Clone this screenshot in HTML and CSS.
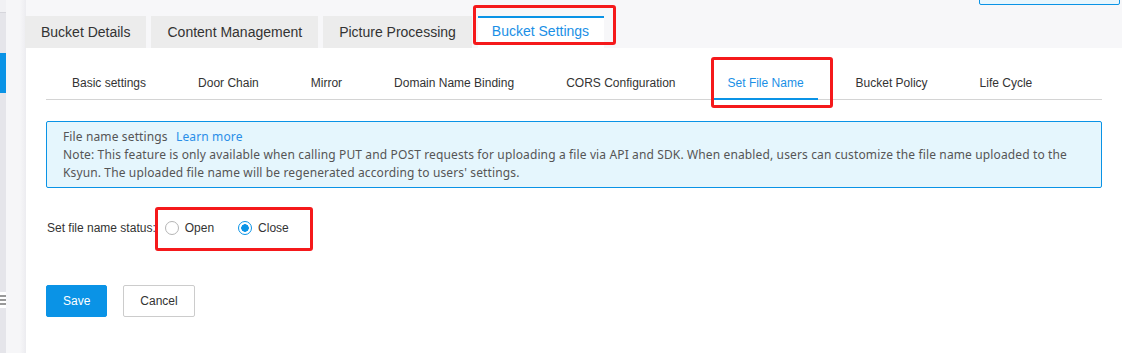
FILE: index.html
```html
<!DOCTYPE html>
<html lang="en">

<head>
    <meta charset="UTF-8">
    <meta name="viewport" content="width=device-width, initial-scale=1.0">
    <title>Bucket Settings</title>
    <link rel="stylesheet" href="styles.css">
</head>

<body>
    <div class="layout">
        <aside class="side-strip">
            <div class="side-active"></div>
            <div class="side-handle">
                <span></span><span></span><span></span>
            </div>
        </aside>
        <div class="gutter"></div>

        <main class="main">
            <div class="top-button"></div>

            <!-- Top level tabs -->
            <ul class="tabs">
                <li class="tab">Bucket Details</li>
                <li class="tab">Content Management</li>
                <li class="tab">Picture Processing</li>
                <li class="tab active">Bucket Settings<span class="mark mark-tab"></span></li>
            </ul>

            <section class="panel">
                <ul class="sub-tabs">
                    <li class="sub-tab">Basic settings</li>
                    <li class="sub-tab">Door Chain</li>
                    <li class="sub-tab">Mirror</li>
                    <li class="sub-tab">Domain Name Binding</li>
                    <li class="sub-tab">CORS Configuration</li>
                    <li class="sub-tab active">Set File Name<span class="mark mark-sub"></span></li>
                    <li class="sub-tab">Bucket Policy</li>
                    <li class="sub-tab">Life Cycle</li>
                </ul>

                <div class="notice">
                    <p>File name settings <a href="#" class="learn-more">Learn more</a></p>
                    <p>Note: This feature is only available when calling PUT and POST requests for uploading a file via API and SDK. When enabled, users can customize the file name uploaded to the<br>
                        Ksyun. The uploaded file name will be regenerated according to users' settings.</p>
                </div>

                <div class="form-row">
                    <span class="form-label">Set file name status:</span>
                    <div class="radio-group">
                        <label class="radio"><span class="radio-dot"></span>Open</label>
                        <label class="radio checked"><span class="radio-dot"></span>Close</label>
                        <span class="mark mark-radio"></span>
                    </div>
                </div>

                <div class="actions">
                    <button class="btn btn-primary">Save</button>
                    <button class="btn">Cancel</button>
                </div>
            </section>
        </main>
    </div>
</body>

</html>
```

FILE: styles.css
```css
/* Page base */
* {
    box-sizing: border-box;
}

body {
    margin: 0;
    font-family: "Liberation Sans", Arial, sans-serif;
    color: #333;
    background: #f7f7f9;
}

ul {
    list-style: none;
    margin: 0;
    padding: 0;
}

.layout {
    display: flex;
    height: 353px;
    overflow: hidden;
}

/* Left sidebar edge */
.side-strip {
    position: relative;
    width: 6px;
    flex-shrink: 0;
    background: #e5e5ea;
    border-top: 12px solid #f1f1f4;
    box-shadow: inset 0 1px 0 #d6d6dc;
}

.side-active {
    margin-top: 41px;
    height: 40px;
    background: #0a93e6;
}

.side-handle {
    display: flex;
    flex-direction: column;
    gap: 2px;
    margin-top: 199px;
    padding: 3px 0;
    background: #fff;
}

.side-handle span {
    height: 2px;
    background: #999;
}

.gutter {
    width: 20px;
    flex-shrink: 0;
    background: linear-gradient(to right, #f6f6f8 70%, #ececf0);
}

.main {
    position: relative;
    flex: 1;
    display: flex;
    flex-direction: column;
    padding-top: 16px;
}

.top-button {
    position: absolute;
    top: -11px;
    right: 2px;
    width: 141px;
    height: 16px;
    background: #e8f6fd;
    border: 1px solid #0a93e6;
    border-radius: 2px;
}

/* Top tabs */
.tabs {
    display: flex;
    gap: 5px;
    margin-left: -1px;
}

.tab {
    height: 32px;
    padding: 0 16px;
    line-height: 32px;
    font-size: 14px;
    color: #333;
    background: #ececec;
}

.tab:nth-child(3) {
    margin-right: 1px;
}

.tab.active {
    position: relative;
    padding: 0 15px 0 14px;
    background: #fff;
    color: #1a8fe6;
    border-top: 2px solid #0a93e6;
    line-height: 26px;
}

/* Annotation frames */
.mark {
    position: absolute;
    border: 3px solid #f5191b;
    border-radius: 3px;
    pointer-events: none;
}

.mark-tab {
    left: -5px;
    right: -12px;
    top: -13px;
    bottom: 3px;
}

.mark-sub {
    left: -3px;
    right: -15px;
    top: -6px;
    bottom: -10px;
}

.mark-radio {
    left: -10px;
    right: -24px;
    top: -11px;
    bottom: -13px;
}

/* Content panel */
.panel {
    flex: 1;
    background: #fff;
    padding: 15px 20px 0;
}

.sub-tabs {
    display: flex;
    border-bottom: 1px solid #d4d4d4;
}

.sub-tab {
    position: relative;
    margin: 0 12px -1px;
    padding: 2px 14px 0;
    height: 37px;
    line-height: 36px;
    font-size: 12px;
    color: #333;
}

.sub-tab.active {
    color: #1a8fe6;
    border-bottom: 2px solid #0a93e6;
}

/* Info box */
.notice {
    margin-top: 21px;
    padding: 6px 16px 5px;
    background: #e5f6fd;
    border: 1px solid #0a93e6;
    border-radius: 2px;
    font-family: "Noto Sans", "Liberation Sans", sans-serif;
    font-size: 12px;
    line-height: 18px;
    letter-spacing: 0.13px;
    color: #555;
}

.notice p {
    margin: 0;
}

.learn-more {
    margin-left: 5px;
    color: #2a8ee8;
    text-decoration: none;
}

/* Radio row */
.form-row {
    display: flex;
    align-items: center;
    margin-top: 30px;
    height: 20px;
    font-size: 12px;
}

.form-label {
    margin-left: 1px;
    color: #333;
}

.radio-group {
    position: relative;
    display: flex;
    align-items: center;
    gap: 24px;
    height: 20px;
    margin-left: 9px;
}

.radio {
    display: flex;
    align-items: center;
    gap: 6px;
    color: #333;
}

.radio-dot {
    width: 14px;
    height: 14px;
    border: 1px solid #b5b5b5;
    border-radius: 50%;
    background: #fff;
}

.radio.checked .radio-dot {
    border-color: #0a93e6;
    background: radial-gradient(circle, #0a93e6 0 3.5px, #fff 4px);
}

/* Buttons */
.actions {
    display: flex;
    gap: 16px;
    margin-top: 47px;
}

.btn {
    height: 32px;
    padding: 0 16px;
    font-family: inherit;
    font-size: 12px;
    color: #333;
    background: #fff;
    border: 1px solid #ccc;
    border-radius: 2px;
}

.btn-primary {
    width: 61px;
    color: #fff;
    background: #0a93e6;
    border-color: #0a93e6;
}

.btn:not(.btn-primary) {
    width: 72px;
}
```
